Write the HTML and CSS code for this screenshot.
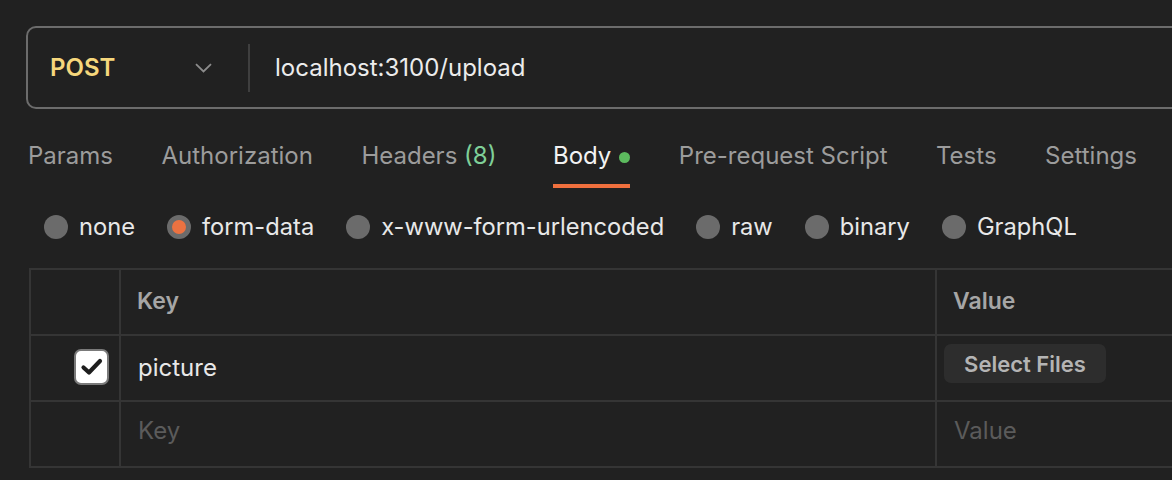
FILE: index.html
```html
<!DOCTYPE html>
<html>
<head>
<meta charset="utf-8">
<link rel="stylesheet" href="styles.css">
</head>
<body>
<div class="page">
  <div class="urlbar">
    <div class="method">
      <span class="method-name">POST</span>
      <svg class="chevron" width="17" height="10" viewBox="0 0 17 10"><path d="M1 1.2 L8.5 8.5 L16 1.2" fill="none" stroke="#8c8c8c" stroke-width="1.8"/></svg>
    </div>
    <div class="divider"></div>
    <div class="url">localhost:3100/upload</div>
  </div>

  <div class="tabs">
    <div class="tab">Params</div>
    <div class="tab">Authorization</div>
    <div class="tab tab-headers">Headers <span class="count">(8)</span></div>
    <div class="tab active">Body<span class="dot"></span></div>
    <div class="tab">Pre-request Script</div>
    <div class="tab">Tests</div>
    <div class="tab">Settings</div>
  </div>

  <div class="radios">
    <div class="radio"><span class="circle"></span>none</div>
    <div class="radio"><span class="circle checked"></span>form-data</div>
    <div class="radio"><span class="circle"></span>x-www-form-urlencoded</div>
    <div class="radio"><span class="circle"></span>raw</div>
    <div class="radio"><span class="circle"></span>binary</div>
    <div class="radio"><span class="circle"></span>GraphQL</div>
  </div>

  <div class="table">
    <div class="cell c-check"></div>
    <div class="cell c-key head">Key</div>
    <div class="cell c-value head">Value</div>

    <div class="cell c-check">
      <span class="checkbox"><svg width="24" height="20" viewBox="0 0 24 20"><path d="M3.5 10.5 L9 15.5 L20 4" fill="none" stroke="#1e1e1e" stroke-width="4.2" stroke-linecap="round" stroke-linejoin="round"/></svg></span>
    </div>
    <div class="cell c-key text">picture</div>
    <div class="cell c-value btn-cell"><span class="btn">Select Files</span></div>

    <div class="cell c-check"></div>
    <div class="cell c-key placeholder">Key</div>
    <div class="cell c-value placeholder">Value</div>
  </div>
</div>
</body>
</html>
```

FILE: styles.css
```css
html, body {
  margin: 0;
  padding: 0;
  background: #212121;
  overflow: hidden;
}
body {
  font-family: Inter, "Noto Sans", sans-serif;
  color: #e6e6e6;
  width: 1172px;
  height: 480px;
}
.page {
  padding-left: 26px;
  padding-top: 26px;
}
.urlbar {
  box-sizing: border-box;
  width: 1200px;
  height: 83px;
  border: 2px solid #6c6c6c;
  border-radius: 10px;
  display: flex;
  align-items: center;
}
.method {
  box-sizing: border-box;
  width: 220px;
  padding-left: 22px;
  padding-right: 36px;
  display: flex;
  align-items: center;
  justify-content: space-between;
}
.method-name {
  font-size: 24px;
  font-weight: 600;
  color: #f6d77c;
  line-height: 28px;
}
.chevron {
  display: block;
  margin-top: 1px;
}
.divider {
  width: 2px;
  height: 48px;
  background: #3f3f3f;
}
.url {
  padding-left: 25px;
  font-size: 24px;
  line-height: 28px;
  color: #ececec;
}
.tabs {
  display: flex;
  gap: 48.5px;
  margin-top: 33px;
  padding-left: 2px;
}
.tab {
  font-size: 24px;
  line-height: 28px;
  color: #9c9c9c;
  padding-bottom: 14px;
  border-bottom: 4px solid transparent;
  display: flex;
  align-items: center;
  white-space: pre;
}
.tab-headers {
  margin-right: 8px;
}
.count {
  color: #7fcf98;
}
.tab.active {
  color: #f2f2f2;
  border-bottom-color: #f0703e;
}
.dot {
  width: 11px;
  height: 11px;
  border-radius: 50%;
  background: #5cba5e;
  margin-left: 8px;
  margin-top: 2px;
}
.radios {
  display: flex;
  gap: 32px;
  margin-top: 27px;
  margin-left: 18px;
}
.radio {
  display: flex;
  align-items: center;
  gap: 11px;
  font-size: 23.7px;
  line-height: 24px;
  color: #e8e8e8;
}
.circle {
  box-sizing: border-box;
  width: 24px;
  height: 24px;
  border-radius: 50%;
  background: #6b6b6b;
}
.circle.checked {
  border: 5.5px solid #6b6b6b;
  background: #ec7241;
}
.table {
  margin-top: 29px;
  margin-left: 3px;
  display: grid;
  grid-template-columns: 90px 816px 400px;
  grid-auto-rows: 66px;
  border-top: 2px solid #353535;
  border-left: 2px solid #353535;
}
.cell {
  box-sizing: border-box;
  border-right: 2px solid #353535;
  border-bottom: 2px solid #353535;
  display: flex;
  align-items: center;
  padding-left: 16px;
  font-size: 24px;
}
.c-check {
  padding-left: 0;
  justify-content: flex-end;
  padding-right: 10px;
}
.head {
  font-weight: 600;
  font-size: 23px;
  color: #a6a6a6;
  padding-bottom: 2px;
}
.text {
  color: #e8e8e8;
  padding-left: 17px;
  padding-bottom: 2px;
}
.placeholder {
  color: #5b5b5b;
  padding-left: 17px;
  padding-bottom: 8px;
}
.checkbox {
  box-sizing: border-box;
  width: 35px;
  height: 36px;
  border: 2px solid #7a7a7a;
  border-radius: 7px;
  background: #ffffff;
  display: flex;
  align-items: center;
  justify-content: center;
  margin-bottom: 3px;
}
.checkbox svg {
  display: block;
}
.btn-cell {
  padding-left: 7px;
  align-items: flex-start;
  padding-top: 8px;
}
.btn {
  box-sizing: border-box;
  height: 39px;
  width: 162px;
  border-radius: 7px;
  background: #2d2d2d;
  color: #b4b4b4;
  font-size: 22px;
  font-weight: 600;
  display: flex;
  align-items: center;
  justify-content: center;
}
```
